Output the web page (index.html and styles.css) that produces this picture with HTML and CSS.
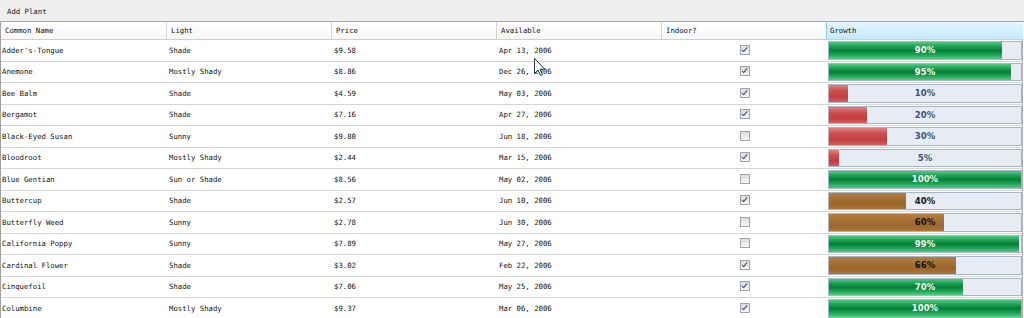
FILE: index.html
```html
<!DOCTYPE html>
<html>
<head>
<meta charset="utf-8">
<title>Plants</title>
<link rel="stylesheet" href="styles.css">
</head>
<body>
	<!-- TOOLBAR -->
	<div class="toolbar"><span class="toolbarItem">Add Plant</span></div>

	<!-- GRID -->
	<div class="grid">
		<div class="row head">
			<div class="cell">Common Name</div>
			<div class="cell">Light</div>
			<div class="cell">Price</div>
			<div class="cell">Available</div>
			<div class="cell">Indoor?</div>
			<div class="cell sorted">Growth</div>
		</div>
		<div id="rows"></div>
	</div>

	<svg class="cursor" width="12" height="19" viewBox="0 0 12 19">
		<path d="M0.5 0.5 L0.5 15.5 L4 12 L6.5 17.5 L8.5 16.5 L6 11.2 L10.8 11.2 Z" fill="#fff" stroke="#333" stroke-width="1"/>
	</svg>

	<script type="text/javascript">
	/* plant data: name, light, price, available, indoor, growth, colour */
	var plants = [
		["Adder's-Tongue", "Shade", "$9.58", "Apr 13, 2006", true, 90, "green"],
		["Anemone", "Mostly Shady", "$8.86", "Dec 26, 2006", true, 95, "green"],
		["Bee Balm", "Shade", "$4.59", "May 03, 2006", true, 10, "red"],
		["Bergamot", "Shade", "$7.16", "Apr 27, 2006", true, 20, "red"],
		["Black-Eyed Susan", "Sunny", "$9.80", "Jun 18, 2006", false, 30, "red"],
		["Bloodroot", "Mostly Shady", "$2.44", "Mar 15, 2006", true, 5, "red"],
		["Blue Gentian", "Sun or Shade", "$8.56", "May 02, 2006", false, 100, "green"],
		["Buttercup", "Shade", "$2.57", "Jun 10, 2006", true, 40, "brown"],
		["Butterfly Weed", "Sunny", "$2.78", "Jun 30, 2006", false, 60, "brown"],
		["California Poppy", "Sunny", "$7.89", "May 27, 2006", false, 99, "green"],
		["Cardinal Flower", "Shade", "$3.02", "Feb 22, 2006", true, 66, "brown"],
		["Cinquefoil", "Shade", "$7.06", "May 25, 2006", true, 70, "green"],
		["Columbine", "Mostly Shady", "$9.37", "Mar 06, 2006", true, 100, "green"]
	];

	var html = "";
	for (var i = 0; i < plants.length; i++) {
		var p = plants[i];
		html += '<div class="row">';
		html += '<div class="cell">' + p[0] + '</div>';
		html += '<div class="cell">' + p[1] + '</div>';
		html += '<div class="cell">' + p[2] + '</div>';
		html += '<div class="cell">' + p[3] + '</div>';
		html += '<div class="cell check"><span class="box' + (p[4] ? ' checked' : '') + '"></span></div>';
		html += '<div class="cell growth"><div class="bar">'
			+ '<div class="fill ' + p[6] + '" style="width:' + p[5] + '%"></div>'
			+ '<span class="label ' + p[6] + 'Text">' + p[5] + '%</span></div></div>';
		html += '</div>';
	}
	document.getElementById('rows').innerHTML = html;
	</script>
</body>
</html>
```

FILE: styles.css
```css
body {
	margin: 0;
	background-color: #ffffff;
	font-family: "DejaVu Sans Mono", "Liberation Mono", monospace;
	font-size: 7.3px;
	color: #111111;
	overflow: hidden;
}

.toolbar {
	height: 22px;
	background-color: #efefef;
	border-bottom: 1px solid #a8a8a8;
	display: flex;
	align-items: center;
	padding-left: 7px;
	padding-top: 1px;
	box-sizing: border-box;
}

.grid {
	width: 1023px;
	border-left: 1px solid #a0a0a0;
	border-right: 1px solid #b0b0b0;
	box-sizing: border-box;
}

.row {
	display: grid;
	grid-template-columns: 166px 165px 165px 165px 165px 196px;
	height: 21.5px;
	box-sizing: border-box;
	border-bottom: 1px solid #d6d6d6;
}

.cell {
	display: flex;
	align-items: center;
	padding-left: 1px;
	white-space: nowrap;
	overflow: hidden;
}

.row .cell:nth-child(2),
.row .cell:nth-child(3),
.row .cell:nth-child(4) {
	padding-left: 2px;
}

.head {
	height: 18px;
	border-bottom: 1px solid #cfcfcf;
}

.head .cell {
	padding-left: 4px;
	border-right: 1px solid #d4d4d4;
	background: linear-gradient(#ffffff, #f7f7f7);
}

.head .cell:nth-child(2),
.head .cell:nth-child(3),
.head .cell:nth-child(4),
.head .cell:nth-child(5) {
	padding-left: 4px;
}

.head .sorted {
	background: linear-gradient(#e3f5fe, #c4e9fb);
	border-left: 1px solid #93c9e6;
	border-right: none;
	margin-left: -1px;
	padding-left: 3px;
}

.check {
	justify-content: center;
	padding-left: 0;
	padding-bottom: 1px;
}

.box {
	width: 8px;
	height: 8px;
	border: 1px solid #a3a3a3;
	background: linear-gradient(#dcdcdc, #f6f6f6);
	position: relative;
}

.box.checked::after {
	content: "";
	position: absolute;
	left: 2px;
	top: 0px;
	width: 2px;
	height: 5px;
	border-right: 1.5px solid #3b4a78;
	border-bottom: 1.5px solid #3b4a78;
	transform: rotate(40deg);
}

.growth {
	padding: 1px;
}

.bar {
	position: relative;
	width: 100%;
	height: 100%;
	border: 1px solid #a7b5c6;
	background-color: #e7ecf4;
	box-sizing: border-box;
	display: flex;
	align-items: center;
	justify-content: center;
	overflow: hidden;
}

.fill {
	position: absolute;
	left: 0;
	top: 0;
	bottom: 0;
}

.fill.green {
	background: linear-gradient(#56c985 0%, #1ea357 25%, #077e35 50%, #1ea357 75%, #56c985 100%);
}

.fill.red {
	background: linear-gradient(#e08080 0%, #cc4d4d 35%, #c23e3e 70%, #d26060 100%);
}

.fill.brown {
	background: linear-gradient(#b3803f 0%, #a46f33 40%, #9b672d 70%, #aa7638 100%);
}

.label {
	position: relative;
	font-family: "DejaVu Sans", "Liberation Sans", sans-serif;
	font-weight: bold;
	font-size: 8.5px;
}

.greenText {
	color: #f4fbf6;
}

.redText {
	color: #3a5378;
}

.brownText {
	color: #111111;
}

.cursor {
	position: absolute;
	left: 534px;
	top: 58px;
}
```
